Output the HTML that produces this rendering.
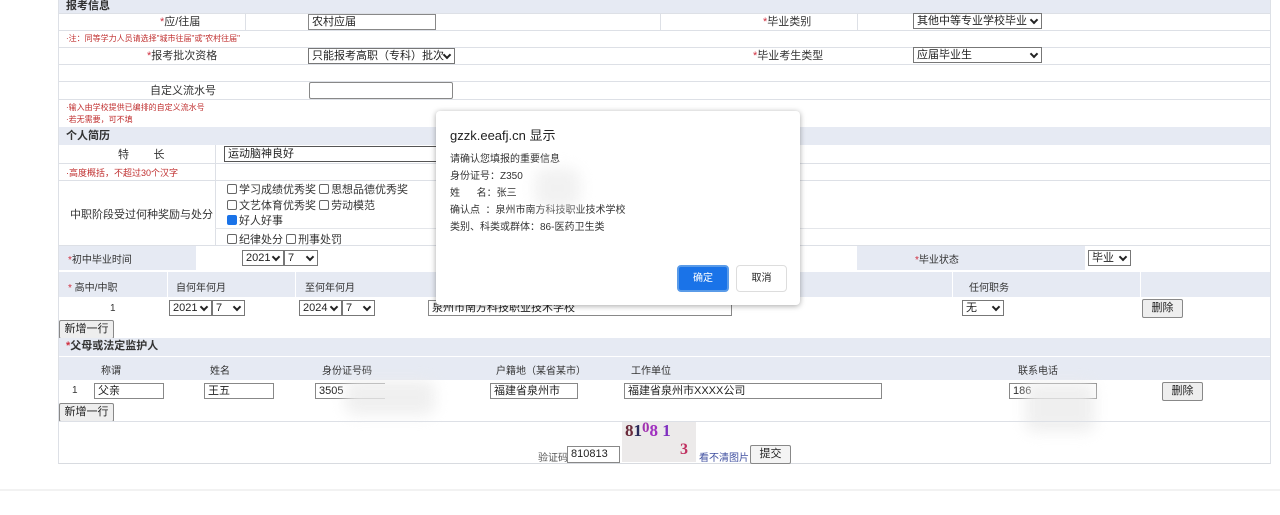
<!DOCTYPE html>
<html><head><meta charset="utf-8"><style>
*{margin:0;padding:0;box-sizing:border-box}
body{width:1280px;height:515px;background:#fff;position:relative;overflow:hidden;font-family:"Liberation Sans","Noto Sans CJK SC",sans-serif;font-size:11px;color:#333}
.a{position:absolute;white-space:nowrap}
.hd{background:#e6eaf3;left:59px;width:1211px}
.ln{position:absolute;left:59px;width:1211px;height:1px;background:#dde0e6}
.red{color:#c03030}
.st{color:#d03040}
.inp{position:absolute;border:1px solid #888;background:#fff;height:16px;font-size:11px;line-height:14px;padding-left:3px;color:#222;white-space:nowrap;overflow:hidden}
.sel{position:absolute;border:1px solid #777;background:#fff;height:16px;font-size:11px;line-height:14px;padding-left:3px;color:#222;white-space:nowrap}
.sel:after{content:"";position:absolute;right:4px;top:3px;width:4px;height:4px;border-right:2px solid #222;border-bottom:2px solid #222;transform:rotate(45deg)}
.btn{position:absolute;border:1px solid #888;background:#eee;border-radius:2px;height:19px;font-size:11px;line-height:17px;text-align:center;color:#222}
.cb{display:inline-block;width:10px;height:10px;border:1px solid #666;border-radius:2px;vertical-align:-1px;margin-right:2px}
.blur{position:absolute;background:#ececec;filter:blur(7px);border-radius:10px;opacity:.8}
</style></head><body>
<div class="a" style="left:58px;top:0;width:1213px;height:464px;border-left:1px solid #dde0e6;border-right:1px solid #dde0e6;border-bottom:1px solid #d8dbe0"></div>
<div class="a hd" style="top:0;height:13px"></div>
<div class="a" style="left:66px;top:0;font-size:11px;line-height:12px;font-weight:bold;color:#333">报考信息</div>
<div class="ln" style="top:13px"></div>
<div class="a" style="left:160px;top:14px;line-height:16px;font-size:11px"><span class="st">*</span>应/往届</div>
<div class="a" style="left:245px;top:13px;width:1px;height:17px;background:#dde0e6"></div>
<div class="a" style="left:660px;top:13px;width:1px;height:17px;background:#dde0e6"></div>
<div class="a" style="left:857px;top:13px;width:1px;height:17px;background:#dde0e6"></div>
<div class="inp" style="left:308px;top:14px;width:128px">农村应届</div>
<div class="a" style="left:763px;top:14px;line-height:16px"><span class="st">*</span>毕业类别</div>
<div class="sel" style="left:913px;top:13px;width:129px">其他中等专业学校毕业</div>
<div class="ln" style="top:30px"></div>
<div class="a red" style="left:66px;top:33px;font-size:8px">·注：同等学力人员请选择"城市往届"或"农村往届"</div>
<div class="ln" style="top:47px"></div>
<div class="a" style="left:147px;top:48px;line-height:16px"><span class="st">*</span>报考批次资格</div>
<div class="sel" style="left:308px;top:48px;width:147px">只能报考高职（专科）批次</div>
<div class="a" style="left:753px;top:48px;line-height:16px"><span class="st">*</span>毕业考生类型</div>
<div class="sel" style="left:913px;top:47px;width:129px">应届毕业生</div>
<div class="ln" style="top:64px"></div>
<div class="ln" style="top:81px"></div>
<div class="a" style="left:150px;top:83px;line-height:16px">自定义流水号</div>
<div class="inp" style="left:309px;top:82px;width:144px;height:17px;border-radius:2px"></div>
<div class="ln" style="top:99px"></div>
<div class="a red" style="left:66px;top:102px;font-size:8px;line-height:12px">·输入由学校提供已编排的自定义流水号<br>·若无需要，可不填</div>
<div class="a hd" style="top:127px;height:18px"></div>
<div class="a" style="left:66px;top:130px;line-height:12px;font-weight:bold">个人简历</div>
<div class="a" style="left:118px;top:148px;line-height:14px">特&nbsp;&nbsp;&nbsp;&nbsp;&nbsp;&nbsp;&nbsp;&nbsp;长</div>
<div class="a" style="left:215px;top:145px;width:1px;height:100px;background:#dde0e6"></div>
<div class="inp" style="left:224px;top:146px;width:220px;border:1px solid #555;border-right:none">运动脑神良好</div>
<div class="ln" style="top:163px"></div>
<div class="a red" style="left:66px;top:166px;font-size:9px">·高度概括，不超过30个汉字</div>
<div class="ln" style="top:180px"></div>
<div class="a" style="left:70px;top:206px;font-size:11px">中职阶段受过何种奖励与处分</div>
<div class="a" style="left:227px;top:183px;line-height:15.5px;font-size:11px"><span class="cb"></span>学习成绩优秀奖 <span class="cb"></span>思想品德优秀奖<br><span class="cb"></span>文艺体育优秀奖 <span class="cb"></span>劳动模范<br><span class="cb" style="background:#1a73e8;border-color:#1a73e8"></span>好人好事</div>
<div class="a" style="left:215px;top:228px;width:1055px;height:1px;background:#e4e6ea"></div>
<div class="a" style="left:227px;top:231px;font-size:11px"><span class="cb"></span>纪律处分 <span class="cb"></span>刑事处罚</div>
<div class="ln" style="top:245px"></div>
<div class="a" style="left:59px;top:246px;width:137px;height:24px;background:#e6eaf3"></div>
<div class="a" style="left:68px;top:251px;font-size:10px"><span class="st">*</span>初中毕业时间</div>
<div class="sel" style="left:242px;top:250px;width:42px">2021</div>
<div class="sel" style="left:284px;top:250px;width:34px">7</div>
<div class="a" style="left:857px;top:246px;width:228px;height:24px;background:#e6eaf3"></div>
<div class="a" style="left:915px;top:251px;font-size:10px"><span class="st">*</span>毕业状态</div>
<div class="sel" style="left:1088px;top:250px;width:43px">毕业</div>
<div class="a hd" style="top:272px;height:25px"></div>
<div class="a" style="left:68px;top:279px;font-size:10px"><span class="st">*</span> 高中/中职</div>
<div class="a" style="left:167px;top:272px;width:1px;height:25px;background:#fff"></div>
<div class="a" style="left:176px;top:279px;font-size:10px">自何年何月</div>
<div class="a" style="left:295px;top:272px;width:1px;height:25px;background:#fff"></div>
<div class="a" style="left:305px;top:279px;font-size:10px">至何年何月</div>
<div class="a" style="left:952px;top:272px;width:1px;height:25px;background:#fff"></div>
<div class="a" style="left:969px;top:279px;font-size:10px">任何职务</div>
<div class="a" style="left:1140px;top:272px;width:1px;height:25px;background:#fff"></div>
<div class="a" style="left:110px;top:303px;font-size:10px">1</div>
<div class="sel" style="left:169px;top:300px;width:43px">2021</div>
<div class="sel" style="left:212px;top:300px;width:33px">7</div>
<div class="sel" style="left:299px;top:300px;width:43px">2024</div>
<div class="sel" style="left:342px;top:300px;width:33px">7</div>
<div class="inp" style="left:428px;top:300px;width:304px">泉州市南方科技职业技术学校</div>
<div class="sel" style="left:962px;top:300px;width:42px">无</div>
<div class="btn" style="left:1142px;top:299px;width:41px">删除</div>
<div class="btn" style="left:59px;top:320px;width:55px">新增一行</div>
<div class="a hd" style="top:338px;height:18px"></div>
<div class="a" style="left:66px;top:340px;font-weight:bold;line-height:13px"><span class="st">*</span>父母或法定监护人</div>
<div class="a hd" style="top:357px;height:23px"></div>
<div class="a" style="left:101px;top:362px;font-size:10px">称谓</div>
<div class="a" style="left:210px;top:362px;font-size:10px">姓名</div>
<div class="a" style="left:322px;top:362px;font-size:10px">身份证号码</div>
<div class="a" style="left:496px;top:362px;font-size:10px">户籍地（某省某市）</div>
<div class="a" style="left:631px;top:362px;font-size:10px">工作单位</div>
<div class="a" style="left:1018px;top:362px;font-size:10px">联系电话</div>
<div class="a" style="left:72px;top:385px;font-size:10px">1</div>
<div class="inp" style="left:94px;top:383px;width:70px">父亲</div>
<div class="inp" style="left:204px;top:383px;width:70px">王五</div>
<div class="inp" style="left:315px;top:383px;width:70px;border-right:none">3505</div>
<div class="blur" style="left:345px;top:380px;width:90px;height:35px"></div>
<div class="inp" style="left:490px;top:383px;width:88px">福建省泉州市</div>
<div class="inp" style="left:624px;top:383px;width:258px">福建省泉州市XXXX公司</div>
<div class="inp" style="left:1009px;top:383px;width:88px">186</div>
<div class="blur" style="left:1025px;top:382px;width:70px;height:50px"></div>
<div class="btn" style="left:1162px;top:382px;width:41px">删除</div>
<div class="btn" style="left:59px;top:403px;width:55px">新增一行</div>
<div class="ln" style="top:421px"></div>
<div class="a" style="left:538px;top:449px;font-size:10px;color:#555">验证码</div>
<div class="inp" style="left:567px;top:446px;width:53px;height:17px">810813</div>
<div class="a" style="left:622px;top:422px;width:74px;height:40px;background:#eceaea"></div>
<div class="a" style="left:625px;top:420px;font-family:'Liberation Serif',serif;font-weight:bold;font-size:17px;color:#6a2a3a">8<span style="color:#2a2a5a">1</span><span style="color:#a030b0;font-size:15px;vertical-align:4px">0</span><span style="color:#a030c0">8</span> <span style="color:#8030c0">1</span></div>
<div class="a" style="left:680px;top:441px;font-family:'Liberation Serif',serif;font-weight:bold;font-size:16px;color:#c03060">3</div>
<div class="a" style="left:699px;top:449px;font-size:10px;color:#4050a0">看不清图片</div>
<div class="btn" style="left:750px;top:445px;width:41px;background:#f4f4f4">提交</div>
<div class="a" style="left:0;top:489px;width:1280px;height:2px;background:#f2f2f2"></div>
<div class="a" style="left:436px;top:111px;width:364px;height:194px;background:#fff;border-radius:4px;box-shadow:0 1px 6px rgba(0,0,0,.35)"></div>
<div class="a" style="left:450px;top:125px;font-size:13px;color:#222">gzzk.eeafj.cn 显示</div>
<div class="a" style="left:450px;top:151px;font-size:10px;line-height:17px;color:#333">请确认您填报的重要信息<br>身份证号：Z350<br>姓&nbsp;&nbsp;&nbsp;&nbsp;&nbsp;&nbsp;名：张三<br>确认点&nbsp;&nbsp;：泉州市南方科技职业技术学校<br>类别、科类或群体：86-医药卫生类</div>
<div class="blur" style="left:535px;top:168px;width:45px;height:40px;opacity:.7"></div>
<div class="a" style="left:677px;top:265px;width:52px;height:27px;background:#1a73e8;border:2px solid #5a9be8;border-radius:4px;color:#fff;font-size:10px;line-height:23px;text-align:center">确定</div>
<div class="a" style="left:736px;top:265px;width:51px;height:27px;background:#fff;border:1px solid #ddd;border-radius:4px;color:#222;font-size:10px;line-height:25px;text-align:center">取消</div>
</body></html>
